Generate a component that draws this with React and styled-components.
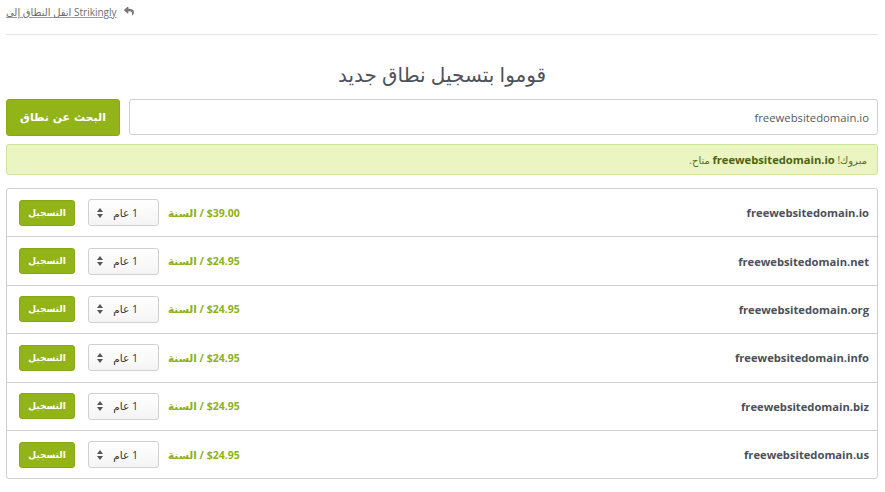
import React from 'react';
import styled, { createGlobalStyle } from 'styled-components';
import { FaReply } from 'react-icons/fa';

const GlobalStyle = createGlobalStyle`
	body {
		margin: 0;
		background: #fff;
		font-family: 'Open Sans', 'DejaVu Sans', sans-serif;
		color: #4b5059;
	}
`;

const domains = [
	{ name: 'freewebsitedomain.io', price: '$39.00' },
	{ name: 'freewebsitedomain.net', price: '$24.95' },
	{ name: 'freewebsitedomain.org', price: '$24.95' },
	{ name: 'freewebsitedomain.info', price: '$24.95' },
	{ name: 'freewebsitedomain.biz', price: '$24.95' },
	{ name: 'freewebsitedomain.us', price: '$24.95' },
];

const Page = styled.div`
	padding: 0 7px 0 6px;
	direction: rtl;
`;

const TopBar = styled.div`
	display: flex;
	justify-content: flex-end;
	align-items: center;
	gap: 7px;
	height: 24px;
	border-bottom: 1px solid #e3e3e3;
	padding-bottom: 10px;
	color: #777;

	svg {
		width: 10px;
		height: 10px;
		margin-top: -2px;
	}
`;

const BackLink = styled.a`
	direction: ltr;
	font-size: 10px;
	color: #6d6d6d;
	text-decoration: underline;
	text-decoration-color: #999;
`;

const Title = styled.h1`
	margin: 25px 0 9px;
	text-align: center;
	font-size: 20px;
	font-weight: 400;
	color: #4d525b;
	line-height: 30px;
`;

const SearchRow = styled.div`
	display: flex;
	gap: 9px;
	height: 36px;
	margin-bottom: 9px;
`;

const SearchInput = styled.div`
	flex: 1;
	display: flex;
	align-items: center;
	padding: 0 8px;
	border: 1px solid #cfd0d4;
	border-radius: 3px;
	font-size: 11.3px;
	color: #555a62;
`;

const GreenButton = styled.button`
	border: 1px solid #87a714;
	border-radius: 3px;
	background: #92b419;
	color: #fff;
	font-family: 'DejaVu Sans', sans-serif;
	font-weight: 700;
	font-size: ${(p) => (p.$small ? '9px' : '11px')};
	width: ${(p) => (p.$small ? '56px' : '114px')};
	height: ${(p) => (p.$small ? '26px' : '37px')};
	padding: 0;
	cursor: pointer;
`;

const Alert = styled.div`
	height: 31px;
	box-sizing: border-box;
	display: flex;
	align-items: center;
	padding: 0 10px;
	background: #eaf5c1;
	border: 1px solid #cde39a;
	border-radius: 3px;
	font-size: 10px;
	color: #5c6e1b;
	margin-bottom: 13px;

	b {
		font-weight: 700;
		font-size: 11.2px;
		color: #4e6213;
	}
`;

const List = styled.div`
	border: 1px solid #cfd0d4;
	border-radius: 3px;
`;

const Row = styled.div`
	display: flex;
	align-items: center;
	height: 47.4px;
	padding: 0 8px 0 12px;

	& + & {
		border-top: 1px solid #cfd0d4;
	}
`;

const DomainName = styled.div`
	flex: 1;
	font-size: 11.2px;
	font-weight: 700;
	color: #4b5059;
`;

const Price = styled.div`
	font-size: 10.5px;
	font-weight: 700;
	color: #8eb01b;
	margin-left: 9px;
`;

const YearSelect = styled.div`
	display: flex;
	align-items: center;
	justify-content: space-between;
	width: 71px;
	height: 27px;
	box-sizing: border-box;
	padding: 0 20px 0 8px;
	border: 1px solid #cfd0d4;
	border-radius: 3px;
	background: linear-gradient(#fff, #f4f4f4);
	font-size: 10.5px;
	color: #333;
	margin-left: 13px;
`;

function Arrows() {
	return (
		<svg width="6" height="10" viewBox="0 0 6 10">
			<path d="M3 0 L6 4 L0 4 Z" fill="#555" />
			<path d="M0 6 L6 6 L3 10 Z" fill="#555" />
		</svg>
	);
}

export default function App() {
	return (
		<Page>
			<GlobalStyle />
			<TopBar>
				<FaReply />
				<BackLink>انقل النطاق إلى Strikingly</BackLink>
			</TopBar>
			<Title>قوموا بتسجيل نطاق جديد</Title>
			<SearchRow>
				<SearchInput>freewebsitedomain.io</SearchInput>
				<GreenButton>البحث عن نطاق</GreenButton>
			</SearchRow>
			<Alert>
				<span>
					مبروك! <b>freewebsitedomain.io</b> متاح.
				</span>
			</Alert>
			<List>
				{domains.map((d) => (
					<Row key={d.name}>
						<DomainName>{d.name}</DomainName>
						<Price>{d.price} / السنة</Price>
						<YearSelect>
							<span>1 عام</span>
							<Arrows />
						</YearSelect>
						<GreenButton $small>التسجيل</GreenButton>
					</Row>
				))}
			</List>
		</Page>
	);
}
